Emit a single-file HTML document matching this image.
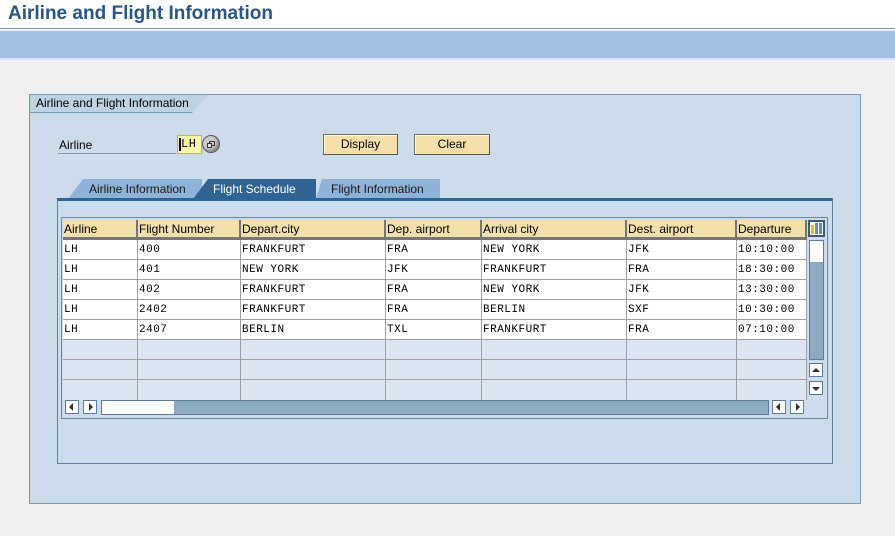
<!DOCTYPE html>
<html><head><meta charset="utf-8"><style>
*{margin:0;padding:0;box-sizing:border-box}
body{width:895px;height:536px;background:#f0f0f0;font-family:"Liberation Sans",Arial,sans-serif;font-size:12px;color:#000;position:relative;overflow:hidden}
.a{position:absolute}
.mono{font-family:"Liberation Mono","DejaVu Sans Mono",monospace;font-size:11px;letter-spacing:0.5px}
.btn{position:absolute;top:134px;height:21px;background:#f4e0a8;border:1px solid #6f6f6f;border-right-color:#555;border-bottom-color:#555;box-shadow:inset 1px 1px 0 #fff8e0;text-align:center;line-height:19px;font-size:12px}
.cell{position:absolute;height:20px;line-height:20px;padding-left:1px;border-right:1px solid #a0a0a0;border-bottom:1px solid #a0a0a0;overflow:hidden;white-space:nowrap}
.hd{background:#f3dfa9;border-right:2px solid #767676;border-bottom:3px solid #767676;height:20px;line-height:18px;font-size:12px;letter-spacing:0}
.sb{position:absolute;width:14px;height:14px;background:#fff;border:1px solid #5d7b98}
</style></head><body>
<div class="a" style="left:0;top:0;width:895px;height:29px;background:#fff;border-bottom:1px solid #8aa0b5"></div>
<div class="a" style="left:8px;top:3px;font-size:19px;font-weight:bold;color:#2a5683">Airline and Flight Information</div>
<div class="a" style="left:0;top:31px;width:895px;height:29px;background:#a4c0e2;border-bottom:2px solid #d8e2ec"></div>

<div class="a" style="left:29px;top:94px;width:832px;height:410px;background:#cddcea;border:1px solid #7a97b2"></div>
<div class="a" style="left:30px;top:95px;width:178px;height:18px;background:#bcd3e4;border-bottom:1px solid #7a97b2;clip-path:polygon(0 0,100% 0,91% 100%,0 100%)"></div>
<div class="a" style="left:36px;top:96px;font-size:12px">Airline and Flight Information</div>

<div class="a" style="left:59px;top:138px">Airline</div>
<div class="a" style="left:58px;top:153px;width:118px;height:1px;background:#8a9aa8"></div>
<div class="a" style="left:177px;top:135px;width:25px;height:19px;background:#fdf7a8;border:1px solid #c0b070"></div>
<div class="a" style="left:179px;top:138px;width:2px;height:13px;background:#000"></div>
<div class="a mono" style="left:181px;top:137px;font-size:12px">LH</div>
<div class="a" style="left:202px;top:135px;width:18px;height:18px;border-radius:50%;background:#ccc;border:1px solid #555;box-shadow:inset -2px -2px 2px #888"></div>
<div class="a" style="left:209px;top:141px;width:6px;height:5px;border:1px solid #333"></div>
<div class="a" style="left:207px;top:143px;width:5px;height:5px;border:1px solid #333;background:#ddd"></div>
<div class="btn" style="left:323px;width:75px">Display</div>
<div class="btn" style="left:414px;width:76px">Clear</div>

<div class="a" style="left:68px;top:179px;width:134px;height:20px;background:#8fb2d8;clip-path:polygon(15px 0,100% 0,100% 100%,0 100%)"></div>
<div class="a" style="left:89px;top:182px;color:#1a1a1a">Airline Information</div>
<div class="a" style="left:193px;top:179px;width:123px;height:20px;background:#2f6394;clip-path:polygon(15px 0,100% 0,100% 100%,0 100%)"></div>
<div class="a" style="left:213px;top:182px;color:#fff">Flight Schedule</div>
<div class="a" style="left:316px;top:179px;width:124px;height:20px;background:#8fb2d8;clip-path:polygon(6px 0,100% 0,100% 100%,0 100%)"></div>
<div class="a" style="left:331px;top:182px;color:#1a1a1a">Flight Information</div>
<div class="a" style="left:57px;top:198px;width:776px;height:266px;background:#cddcea;border:1px solid #5f7f9f;border-top:3px solid #2f6394"></div>

<div class="a" style="left:61px;top:217px;width:767px;height:202px;border:1px solid #6c87a0;background:#cddcea"></div>
<div class="a" style="left:63px;top:220px;width:744px;height:180px;background:#dce6f2"></div>
<div class="a" style="left:63px;top:239px;width:744px;height:100px;background:#fff"></div>
<script>
var cols=[63,138,241,386,482,627,737,807];
var hd=["Airline","Flight Number","Depart.city","Dep. airport","Arrival city","Dest. airport","Departure"];
var rows=[["LH","400","FRANKFURT","FRA","NEW YORK","JFK","10:10:00"],["LH","401","NEW YORK","JFK","FRANKFURT","FRA","18:30:00"],["LH","402","FRANKFURT","FRA","NEW YORK","JFK","13:30:00"],["LH","2402","FRANKFURT","FRA","BERLIN","SXF","10:30:00"],["LH","2407","BERLIN","TXL","FRANKFURT","FRA","07:10:00"],["","","","","","",""],["","","","","","",""],["","","","","","",""]];
var h="";
for(var c=0;c<7;c++){h+='<div class="cell hd" style="left:'+cols[c]+'px;top:220px;width:'+(cols[c+1]-cols[c])+'px">'+hd[c]+'</div>';}
for(var r=0;r<8;r++){for(var c=0;c<7;c++){h+='<div class="cell mono" style="left:'+cols[c]+'px;top:'+(240+r*20)+'px;width:'+(cols[c+1]-cols[c])+'px;'+(r==7?'border-bottom:none;':'')+'">'+rows[r][c]+'</div>';}}
document.write(h);
</script>
<div class="a" style="left:808px;top:220px;width:17px;height:17px;background:#fff;border:2px solid #3a5a7a"></div>
<div class="a" style="left:811px;top:225px;width:3px;height:9px;background:#e8c000"></div>
<div class="a" style="left:815px;top:223px;width:3px;height:11px;background:#6a8cb0"></div>
<div class="a" style="left:819px;top:223px;width:3px;height:11px;background:#6a8cb0"></div>
<div class="a" style="left:809px;top:240px;width:15px;height:120px;background:#8eaabf;border:1px solid #5d7b98"></div>
<div class="a" style="left:810px;top:241px;width:13px;height:21px;background:#fff"></div>
<div class="sb" style="left:809px;top:363px"></div>
<div class="a" style="left:812px;top:368px;border-left:4px solid transparent;border-right:4px solid transparent;border-bottom:4px solid #333"></div>
<div class="sb" style="left:809px;top:381px"></div>
<div class="a" style="left:812px;top:387px;border-left:4px solid transparent;border-right:4px solid transparent;border-top:4px solid #333"></div>
<div class="sb" style="left:65px;top:400px"></div>
<div class="a" style="left:69px;top:403px;border-top:4px solid transparent;border-bottom:4px solid transparent;border-right:4px solid #333"></div>
<div class="sb" style="left:83px;top:400px"></div>
<div class="a" style="left:89px;top:403px;border-top:4px solid transparent;border-bottom:4px solid transparent;border-left:4px solid #333"></div>
<div class="a" style="left:101px;top:400px;width:668px;height:15px;background:#8eaabf;border:1px solid #5d7b98"></div>
<div class="a" style="left:102px;top:401px;width:72px;height:13px;background:#fff"></div>
<div class="sb" style="left:772px;top:400px"></div>
<div class="a" style="left:776px;top:403px;border-top:4px solid transparent;border-bottom:4px solid transparent;border-right:4px solid #333"></div>
<div class="sb" style="left:790px;top:400px"></div>
<div class="a" style="left:796px;top:403px;border-top:4px solid transparent;border-bottom:4px solid transparent;border-left:4px solid #333"></div>
</body></html>
